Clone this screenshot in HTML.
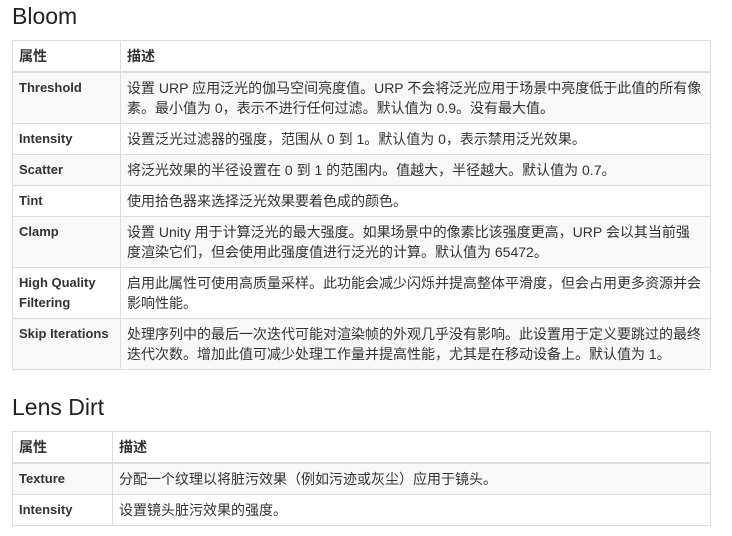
<!DOCTYPE html>
<html><head><meta charset="utf-8"><style>
body{margin:0;background:#fff;font-family:"Liberation Sans","Noto Sans CJK SC",sans-serif;color:#333;font-size:13px;}
h2{font-weight:normal;font-size:23px;margin:0;position:absolute;left:12px;color:#222;}
table{position:absolute;left:12px;width:699px;border-collapse:collapse;}
td,th{border:1px solid #ddd;padding:5px 6px 5px;line-height:20px;text-align:left;vertical-align:top;}
th{font-weight:bold;border-bottom:2px solid #ddd;height:20px;font-size:14px;}
td:first-child{font-weight:bold;}
td+td{font-size:14px;padding-right:8px;}
tr.g td{background:#f8f8f8;}
</style></head><body>
<h2 style="top:3px">Bloom</h2>
<table style="top:40px">
<colgroup><col style="width:108px"><col></colgroup>
<tr><th>属性</th><th>描述</th></tr>
<tr class="g"><td>Threshold</td><td>设置 URP 应用泛光的伽马空间亮度值。URP 不会将泛光应用于场景中亮度低于此值的所有像素。最小值为 0，表示不进行任何过滤。默认值为 0.9。没有最大值。</td></tr>
<tr><td>Intensity</td><td>设置泛光过滤器的强度，范围从 0 到 1。默认值为 0，表示禁用泛光效果。</td></tr>
<tr class="g"><td>Scatter</td><td>将泛光效果的半径设置在 0 到 1 的范围内。值越大，半径越大。默认值为 0.7。</td></tr>
<tr><td>Tint</td><td>使用拾色器来选择泛光效果要着色成的颜色。</td></tr>
<tr class="g"><td>Clamp</td><td>设置 Unity 用于计算泛光的最大强度。如果场景中的像素比该强度更高，URP 会以其当前强度渲染它们，但会使用此强度值进行泛光的计算。默认值为 65472。</td></tr>
<tr><td>High Quality Filtering</td><td>启用此属性可使用高质量采样。此功能会减少闪烁并提高整体平滑度，但会占用更多资源并会影响性能。</td></tr>
<tr class="g"><td>Skip Iterations</td><td>处理序列中的最后一次迭代可能对渲染帧的外观几乎没有影响。此设置用于定义要跳过的最终迭代次数。增加此值可减少处理工作量并提高性能，尤其是在移动设备上。默认值为 1。</td></tr>
</table>
<h2 style="top:394px">Lens Dirt</h2>
<table style="top:431px">
<colgroup><col style="width:100px"><col></colgroup>
<tr><th>属性</th><th>描述</th></tr>
<tr class="g"><td>Texture</td><td>分配一个纹理以将脏污效果（例如污迹或灰尘）应用于镜头。</td></tr>
<tr><td>Intensity</td><td>设置镜头脏污效果的强度。</td></tr>
</table>
</body></html>
